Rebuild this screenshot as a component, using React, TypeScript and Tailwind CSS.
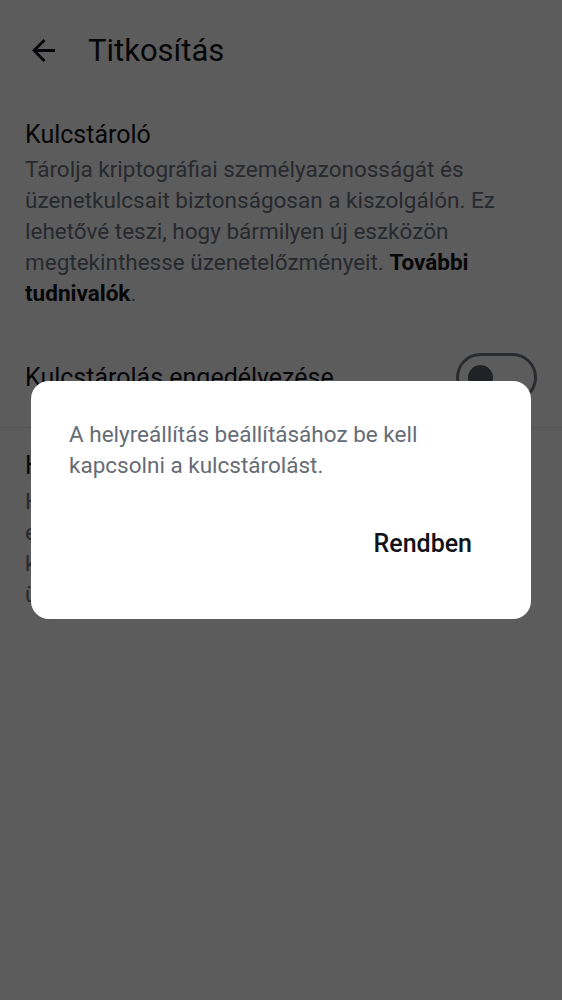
const BackArrow = () => (
  <svg viewBox="4 4 16 16" className="w-[23px] h-[23px] text-[#111318]" fill="currentColor">
    <path d="M20 11H7.83l5.59-5.59L12 4l-8 8 8 8 1.41-1.41L7.83 13H20v-2z" />
  </svg>
);

const App = () => {
  return (
    <div className="relative min-h-[1000px] bg-white font-['Roboto',sans-serif] text-[#111318]">
      {/*header*/}
      <div className="flex items-center h-[100px] pl-[32px]">
        <BackArrow />
        <h1 className="ml-[33px] text-[31px] leading-none">Titkosítás</h1>
      </div>

      {/*keystore*/}
      <div className="px-[25px] pt-[20px]">
        <h2 className="text-[25px] leading-[30px]">Kulcstároló</h2>
        <p className="mt-[4px] text-[22.5px] leading-[31px] text-[#6b7280]">
          Tárolja kriptográfiai személyazonosságát és üzenetkulcsait
          biztonságosan a kiszolgálón. Ez lehetővé teszi, hogy bármilyen új
          eszközön megtekinthesse üzenetelőzményeit.{" "}
          <span className="font-bold text-[#111318]">További tudnivalók</span>.
        </p>
      </div>

      {/*toggle row*/}
      <div className="flex items-center justify-between px-[25px] mt-[44px] pb-[25px] border-b border-[#e5e7eb]">
        <span className="text-[25px] leading-[30px]">Kulcstárolás engedélyezése</span>
        <div className="flex items-center w-[81px] h-[49px] rounded-full border-[3px] border-[#737a84] pl-[9px]">
          <div className="w-[25px] h-[25px] rounded-full bg-[#5a6068]" />
        </div>
      </div>

      {/*recovery*/}
      <div className="px-[25px] pt-[23px]">
        <h2 className="text-[25px] leading-[30px]">Helyreállítás</h2>
        <p className="mt-[5px] text-[22.5px] leading-[31px] text-[#6b7280]">
          Helyreállítási kulcs beállítása, amellyel
          <br />
          elérheti titkosított üzeneteit, ha
          <br />
          kijelentkezik vagy elveszíti az összes
          <br />
          üzenetét.
        </p>
      </div>

      {/*dialog*/}
      <div className="fixed inset-0 bg-black/[0.64] flex items-center justify-center">
        <div className="w-[500px] h-[238px] bg-white rounded-[18px] pt-[38px] px-[38px] flex flex-col">
          <p className="text-[22.5px] leading-[31px] text-[#656c76]">
            A helyreállítás beállításához be kell kapcsolni a kulcstárolást.
          </p>
          <div className="flex justify-end mt-[39px] mr-[5px]">
            <button className="h-[48px] px-[16px] text-[25px] font-medium text-[#111318]">
              Rendben
            </button>
          </div>
        </div>
      </div>
    </div>
  );
};

export default App;
